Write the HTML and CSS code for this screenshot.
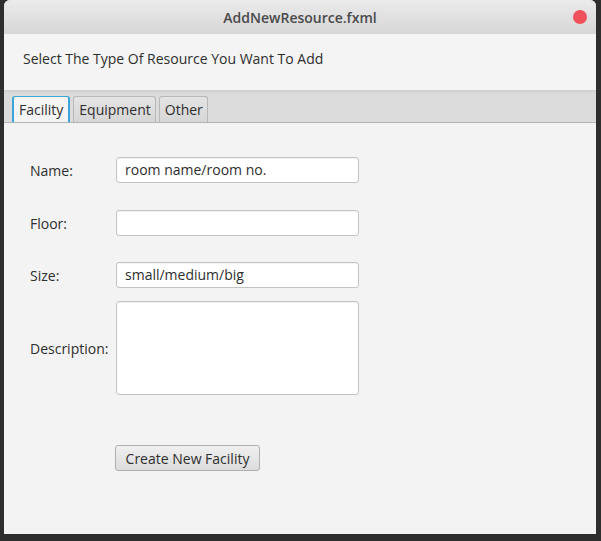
FILE: index.html
```html
<!DOCTYPE html>
<html>
<head>
<meta charset="utf-8">
<link rel="stylesheet" href="styles.css">
</head>
<body>
<div class="window">
  <div class="titlebar">
    <span class="title">AddNewResource.fxml</span>
    <span class="close"></span>
  </div>
  <div class="header">Select The Type Of Resource You Want To Add</div>
  <div class="tabbar">
    <div class="tab selected">Facility</div>
    <div class="tab">Equipment</div>
    <div class="tab">Other</div>
  </div>
  <div class="content">
    <div class="row r-name">
      <label class="lbl">Name:</label>
      <div class="field">room name/room no.</div>
    </div>
    <div class="row r-floor">
      <label class="lbl">Floor:</label>
      <div class="field"></div>
    </div>
    <div class="row r-size">
      <label class="lbl">Size:</label>
      <div class="field">small/medium/big</div>
    </div>
    <div class="row r-desc">
      <label class="lbl">Description:</label>
      <div class="field area"></div>
    </div>
    <div class="actions">
      <button class="btn">Create New Facility</button>
    </div>
  </div>
</div>
</body>
</html>
```

FILE: styles.css
```css
html, body {
  margin: 0;
  padding: 0;
}
body {
  width: 601px;
  height: 541px;
  background: #2e2e2e;
  font-family: "Open Sans", "Noto Sans", sans-serif;
  overflow: hidden;
}
.window {
  margin-left: 4px;
  width: 592px;
  height: 534px;
  background: #f3f3f3;
  border-radius: 6px 6px 0 0;
  overflow: hidden;
  display: flex;
  flex-direction: column;
}
.titlebar {
  height: 34px;
  flex: none;
  display: flex;
  align-items: center;
  justify-content: center;
  position: relative;
  background: linear-gradient(#ebebeb, #d6d6d6);
}
.title {
  font-size: 14px;
  font-weight: 600;
  color: #4a4a4a;
}
.close {
  position: absolute;
  right: 9px;
  top: 10px;
  width: 14px;
  height: 14px;
  border-radius: 50%;
  background: #f2505a;
}
.header {
  height: 56px;
  flex: none;
  box-sizing: border-box;
  padding: 15px 0 0 19px;
  font-size: 14px;
  color: #2e2e2e;
  background: #f4f4f4;
}
.tabbar {
  height: 33px;
  flex: none;
  box-sizing: border-box;
  display: flex;
  align-items: flex-end;
  gap: 3px;
  padding: 0 0 0 8px;
  background: linear-gradient(#cfcfcf, #dcdcdc 4px, #dcdcdc);
  border-bottom: 1px solid #b3b3b3;
}
.tab {
  height: 26px;
  box-sizing: border-box;
  padding: 0 4px 0 5px;
  display: flex;
  align-items: center;
  font-size: 14px;
  color: #2e2e2e;
  border: 1px solid #b8b8b8;
  border-bottom: none;
  border-radius: 3px 3px 0 0;
  background: linear-gradient(#e4e4e4, #d6d6d6);
}
.tab.selected {
  border-color: #3da6d8;
  border-width: 1px 2px 0 2px;
  padding: 0 5px;
  background: #f4f4f4;
}
.content {
  flex: 1;
  padding: 34px 0 0 26px;
}
.row {
  display: flex;
  align-items: center;
}
.r-floor {
  margin-top: 27px;
}
.r-size {
  margin-top: 26px;
}
.r-desc {
  margin-top: 13px;
}
.lbl {
  width: 86px;
  flex: none;
  font-size: 14px;
  color: #2e2e2e;
}
.field {
  width: 243px;
  height: 26px;
  box-sizing: border-box;
  background: #fff;
  border: 1px solid #c4c4c4;
  border-radius: 3px;
  box-shadow: inset 0 1px 1px rgba(0,0,0,0.05);
  font-size: 14px;
  color: #2e2e2e;
  padding: 0 8px;
  line-height: 24px;
}
.field.area {
  height: 94px;
}
.actions {
  padding: 50px 0 0 85px;
}
.btn {
  display: block;
  font-family: inherit;
  font-size: 14px;
  color: #2e2e2e;
  width: 145px;
  height: 26px;
  padding: 0;
  border: 1px solid #b0b0b0;
  border-radius: 3px;
  background: linear-gradient(#f0f0f0, #dcdcdc);
}
```
